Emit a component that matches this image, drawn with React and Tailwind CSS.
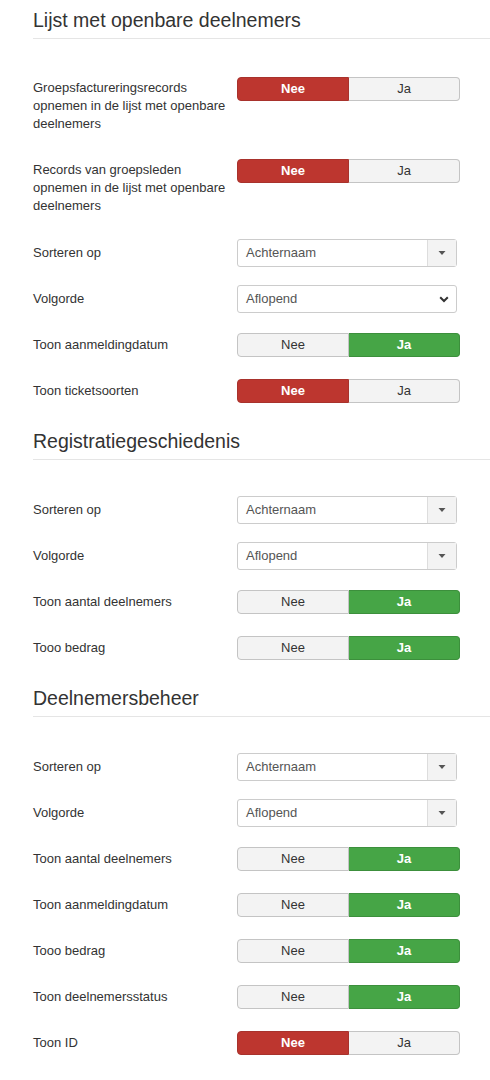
import React from "react";

const font = { fontFamily: '"Liberation Sans", Arial, sans-serif' };

function Toggle({ value }) {
    const yes = value === "ja";
    return (
        <div className="mt-[2px] flex h-[24px] w-[223px] text-[13px] leading-[22px]">
            <div
                className={`flex w-[112px] items-center justify-center rounded-l-[4px] border ${!yes
                        ? "border-[#a8322c] bg-[#bd362f] font-bold text-white"
                        : "border-[#c4c4c4] bg-[#f3f3f3] text-[#333]"
                    }`}
            >
                Nee
            </div>
            <div
                className={`flex flex-1 items-center justify-center rounded-r-[4px] border border-l-0 ${yes
                        ? "border-[#3c8f3c] bg-[#46a546] font-bold text-white"
                        : "border-[#c4c4c4] bg-[#f3f3f3] text-[#333]"
                    }`}
            >
                Ja
            </div>
        </div>
    );
}

function ChosenSelect({ value }) {
    return (
        <div className="flex h-[28px] w-[220px] rounded-[3px] border border-[#ccc] bg-white text-[13px] text-[#555]">
            <div className="flex flex-1 items-center pl-[8px]">{value}</div>
            <div className="flex w-[29px] items-center justify-center border-l border-[#ddd] bg-[#f3f3f3]">
                <svg width="8" height="4" viewBox="0 0 8 4">
                    <path d="M0.5 0 L7.5 0 L4 4 Z" fill="#555" />
                </svg>
            </div>
        </div>
    );
}

function NativeSelect({ value }) {
    return (
        <div className="flex h-[28px] w-[220px] items-center justify-between rounded-[3px] border border-[#ccc] bg-white pl-[8px] pr-[7px] text-[13px] text-[#555]">
            <span>{value}</span>
            <svg width="10" height="7" viewBox="0 0 10 7">
                <path d="M1.2 1.2 L5 5 L8.8 1.2" fill="none" stroke="#333" strokeWidth="2" />
            </svg>
        </div>
    );
}

function Row({ label, children, multi }) {
    return (
        <div className={`flex min-h-[28px] items-start ${multi ? "mb-[24px]" : "mb-[18px]"}`}>
            <div className={`w-[204px] text-[13px] text-[#333] ${multi ? "pt-[4px] leading-[18px]" : "pt-[4px] leading-[20px]"}`}>
                {label}
            </div>
            {children}
        </div>
    );
}

function Heading({ children }) {
    return (
        <div className="mb-[36px] border-b border-[#e5e5e5] text-[19.5px] leading-[36px] text-[#333]">
            {children}
        </div>
    );
}

export default function App() {
    return (
        <div className="min-h-[1080px] w-[490px] bg-white pl-[33px] pt-[2px]" style={font}>
            <Heading>Lijst met openbare deelnemers</Heading>
            <Row multi label="Groepsfactureringsrecords opnemen in de lijst met openbare deelnemers">
                <Toggle value="nee" />
            </Row>
            <Row multi label="Records van groepsleden opnemen in de lijst met openbare deelnemers">
                <Toggle value="nee" />
            </Row>
            <Row label="Sorteren op"><ChosenSelect value="Achternaam" /></Row>
            <Row label="Volgorde"><NativeSelect value="Aflopend" /></Row>
            <Row label="Toon aanmeldingdatum"><Toggle value="ja" /></Row>
            <Row label="Toon ticketsoorten"><Toggle value="nee" /></Row>

            <Heading>Registratiegeschiedenis</Heading>
            <Row label="Sorteren op"><ChosenSelect value="Achternaam" /></Row>
            <Row label="Volgorde"><ChosenSelect value="Aflopend" /></Row>
            <Row label="Toon aantal deelnemers"><Toggle value="ja" /></Row>
            <Row label="Tooo bedrag"><Toggle value="ja" /></Row>

            <Heading>Deelnemersbeheer</Heading>
            <Row label="Sorteren op"><ChosenSelect value="Achternaam" /></Row>
            <Row label="Volgorde"><ChosenSelect value="Aflopend" /></Row>
            <Row label="Toon aantal deelnemers"><Toggle value="ja" /></Row>
            <Row label="Toon aanmeldingdatum"><Toggle value="ja" /></Row>
            <Row label="Tooo bedrag"><Toggle value="ja" /></Row>
            <Row label="Toon deelnemersstatus"><Toggle value="ja" /></Row>
            <Row label="Toon ID"><Toggle value="nee" /></Row>
        </div>
    );
}
